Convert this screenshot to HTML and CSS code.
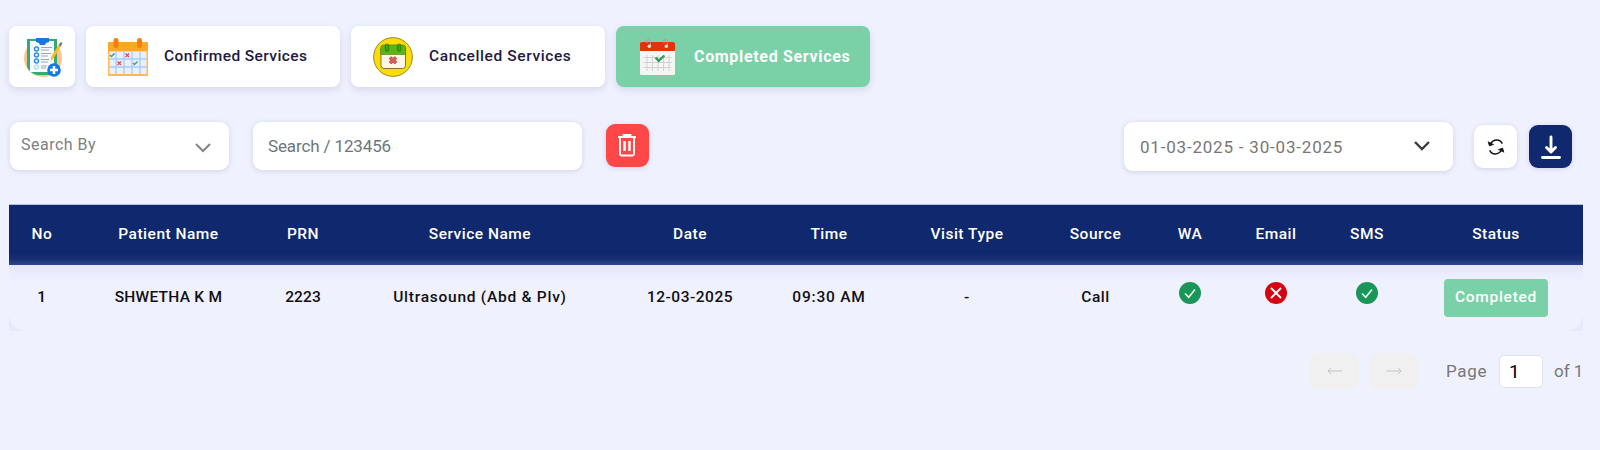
FILE: index.html
```
<!DOCTYPE html>
<html lang="en">
<head>
<meta charset="utf-8">
<title>Completed Services</title>
<link rel="stylesheet" href="styles.css">
</head>
<body>
<nav class="tabs">
  <a class="tab tab-icon">
    <svg class="art" viewBox="0 0 40 40">
      <circle cx="20" cy="21" r="19" fill="#fbc48e"/>
      <path d="M4 30V2h30v36H14Q7 36 4 30z" fill="#35a978"/>
      <path d="M7 4h24v31H7z" fill="#f6fbff"/>
      <path d="M13 1h13v4l-3 1-1 2h-5l-1-2-3-1z" fill="#1479e0"/>
      <g fill="none" stroke="#2f8fe8" stroke-width="1.5"><circle cx="13.500" cy="12" r="2"/><circle cx="13.500" cy="18" r="2"/><circle cx="13.500" cy="24" r="2"/><circle cx="13.500" cy="30" r="2" stroke="#b9dcfa"/></g>
      <path d="M18 10.500h11M18 13h8M18 16.500h10M18 19h7M18 22.500h8M18 25h7M18 29h6M18 31h5" stroke="#a2a5a8" stroke-width="1.200"/>
      <path d="M27.500 24l1-5L37 6l2 1.500-8.500 14z" fill="#fbbc1e"/>
      <path d="M35.500 8L38 5l1.500 1-2 3.500z" fill="#777"/>
      <circle cx="31" cy="33" r="6.800" fill="#1479e8"/>
      <path d="M31 29v8M27 33h8" stroke="#fff" stroke-width="2.600"/>
    </svg>
  </a>
  <a class="tab">
    <svg class="art" viewBox="0 0 40 40">
      <rect x="0" y="5" width="40" height="34" rx="1" fill="#ffb955"/>
      <path d="M0 14V6q0-1 1-1h38q1 0 1 1v8z" fill="#ffa62b"/>
      <path d="M1.500 14.500h37V37h-37z" fill="#e9f0fc"/>
      <path d="M8 14.500V37M16 14.500V37M24 14.500V37M32 14.500V37M1.500 22h37M1.500 30h37" stroke="#a5ccfb" stroke-width="1.300"/>
      <rect x="5.500" y="1" width="5" height="10" rx="2.500" fill="#f97a1f"/><rect x="29" y="1" width="5" height="10" rx="2.500" fill="#f97a1f"/>
      <path d="M2 18l1.500 1.500L6.500 16.500M25 26l1.500 1.500 3-3" fill="none" stroke="#3aa66b" stroke-width="1.500"/>
      <path d="M17.500 16.500l3.500 3.500m0-3.500L17.500 20M9.500 24.500L13 28m0-3.500L9.500 28" stroke="#e14b5e" stroke-width="1.400"/>
    </svg>
    <span>Confirmed Services</span>
  </a>
  <a class="tab tab-cancelled">
    <svg class="art" viewBox="0 0 40 40">
      <circle cx="20" cy="20" r="19.400" fill="#fbdc07" stroke="#7c731c" stroke-width=".8"/>
      <rect x="8" y="9" width="24.500" height="22.500" rx="3" fill="#fff8e8" stroke="#8a5a2c" stroke-width=".9"/>
      <path d="M7.700 17.500V11q0-3 3-3h19q3 0 3 3v6.500z" fill="#5fb414" stroke="#477f16" stroke-width=".6"/>
      <rect x="12.300" y="7.200" width="3.500" height="7" rx="1" fill="#3f9d1c" stroke="#2d7410" stroke-width=".7"/><rect x="24.300" y="7.200" width="3.500" height="7" rx="1" fill="#3f9d1c" stroke="#2d7410" stroke-width=".7"/>
      <path d="M17 20.500l6 5.500m0-5.500L17 26" stroke="#a44642" stroke-width="3.400"/><path d="M17 20.500l6 5.500m0-5.500L17 26" stroke="#e65b60" stroke-width="2.200"/>
    </svg>
    <span>Cancelled Services</span>
  </a>
  <a class="tab tab-active">
    <svg class="art" viewBox="0 0 40 40">
      <rect x="2" y="5" width="35" height="33" rx="1.500" fill="#f5f5f4"/>
      <path d="M2 14V6.500Q2 5 3.500 5h32Q37 5 37 6.500V14z" fill="#e63208"/>
      <path d="M9 18v16M14.500 18v16M20 18v16M25.500 18v16M31 18v16M5.500 20.500h28M5.500 25.500h28M5.500 30.500h28" stroke="#cfcfd2" stroke-width=".9" fill="none"/>
      <path d="M17.500 20.500l3.200 3.300 5.700-5.300" fill="none" stroke="#2f9b55" stroke-width="2.300"/>
      <path d="M9 6q-1-4 1.500-4 2 0 2 7M26 6q-1-4 1.500-4 2 0 2 7" fill="none" stroke="#b99b91" stroke-width="1"/>
      <circle cx="11.300" cy="9.300" r="1.700" fill="#ffe1d8"/><circle cx="28.300" cy="9.300" r="1.700" fill="#ffe1d8"/>
    </svg>
    <span>Completed Services</span>
  </a>
</nav>

<section class="filters">
  <div class="field field-select">
    <span>Search By</span>
    <svg width="18" height="12" viewBox="0 0 18 12"><path d="M2 2l7 7 7-7" fill="none" stroke="#858585" stroke-width="2"/></svg>
  </div>
  <div class="field field-search"><span>Search / 123456</span></div>
  <button class="square square-delete">
    <svg width="20" height="24" viewBox="0 0 20 24"><path d="M1 4h18M6.500 3.500V2h7v1.500" fill="none" stroke="#fff" stroke-width="1.800"/><path d="M3 4v17q0 1.500 1.500 1.500h11q1.500 0 1.500-1.500V4" fill="none" stroke="#fff" stroke-width="1.900"/><path d="M6.300 8h2.500v10H6.300zM11.200 8h2.500v10h-2.500z" fill="#fff"/></svg>
  </button>
  <div class="field field-date">
    <span>01-03-2025 - 30-03-2025</span>
    <svg width="18" height="12" viewBox="0 0 18 12"><path d="M2 2l7 7 7-7" fill="none" stroke="#3c3c3c" stroke-width="2.400"/></svg>
  </div>
  <button class="square square-refresh">
    <svg width="18" height="18" viewBox="0 0 20 18"><path d="M3.500 6.200Q6 1.300 11 1.300q4 0 6 4M16.500 11.800Q14 16.700 9 16.700q-4 0-6-4" fill="none" stroke="#111" stroke-width="1.700"/><path d="M1.300 3l1.400 4.700L7.500 6M18.700 15l-1.400-4.700-4.800 1.700" fill="#111" stroke="#111" stroke-width="1" stroke-linejoin="round"/></svg>
  </button>
  <button class="square square-download">
    <svg width="22" height="26" viewBox="0 0 22 26"><path d="M11 3v15M6.500 13.500L11 18l4.500-4.500M2.500 23.500h17" fill="none" stroke="#fff" stroke-width="2.900" stroke-linecap="round" stroke-linejoin="round"/></svg>
  </button>
</section>

<table class="services">
  <colgroup><col class="c-no"><col class="c-name"><col class="c-prn"><col class="c-service"><col class="c-date"><col class="c-time"><col class="c-visit"><col class="c-source"><col class="c-wa"><col class="c-email"><col class="c-sms"><col class="c-status"></colgroup>
  <thead>
    <tr><th>No</th><th>Patient Name</th><th>PRN</th><th>Service Name</th><th>Date</th><th>Time</th><th>Visit Type</th><th>Source</th><th>WA</th><th>Email</th><th>SMS</th><th>Status</th></tr>
  </thead>
  <tbody>
    <tr>
      <td>1</td><td class="t-name">SHWETHA K M</td><td class="t-prn">2223</td><td class="t-service">Ultrasound (Abd &amp; Plv)</td><td>12-03-2025</td><td class="t-time">09:30 AM</td><td>-</td><td>Call</td>
      <td><svg class="mark" viewBox="0 0 22 22"><circle cx="11" cy="11" r="11" fill="#1a9658"/><path d="M6 11.500l3.700 3.700 6.300-7.700" fill="none" stroke="#e8fff2" stroke-width="1.600"/></svg></td>
      <td><svg class="mark" viewBox="0 0 22 22"><circle cx="11" cy="11" r="11" fill="#d40511"/><path d="M6.500 6.500l9 9m0-9l-9 9" stroke="#fff" stroke-width="1.900" stroke-linecap="round"/></svg></td>
      <td><svg class="mark" viewBox="0 0 22 22"><circle cx="11" cy="11" r="11" fill="#1a9658"/><path d="M6 11.500l3.700 3.700 6.300-7.700" fill="none" stroke="#e8fff2" stroke-width="1.600"/></svg></td>
      <td><span class="status">Completed</span></td>
    </tr>
  </tbody>
</table>

<footer class="pager">
  <button class="step"><svg width="15" height="8" viewBox="0 0 15 8"><path d="M15 4H1M4 1L1 4l3 3" fill="none" stroke="#c3c3c3"/></svg></button>
  <button class="step"><svg width="15" height="8" viewBox="0 0 15 8"><path d="M0 4h14M11 1l3 3-3 3" fill="none" stroke="#c3c3c3"/></svg></button>
  <span class="page-label">Page</span>
  <span class="page-box">1</span>
  <span class="page-total">of 1</span>
</footer>
</body>
</html>
```
FILE: styles.css
```
* { box-sizing: border-box; }
body {
  margin: 0;
  padding: 26px 17px 0 9px;
  height: 450px;
  overflow: hidden;
  background: #f0f1ff;
  font-family: Roboto, "Open Sans", sans-serif;
  font-size: 16px;
}
button { border: 0; padding: 0; font: inherit; }
svg { display: block; flex: none; }

.tabs { display: flex; gap: 11px; height: 61px; }
.tab {
  display: flex;
  align-items: center;
  gap: 16px;
  width: 254px;
  padding: 0 0 0 22px;
  border-radius: 8px;
  background: #fff;
  color: #231942;
  font-weight: 500;
  font-size: 15.5px;
  letter-spacing: .4px;
  white-space: nowrap;
  box-shadow: 0 3px 7px rgba(60, 60, 90, .14);
}
.tab span { padding-bottom: 1px; }
.tab-icon { width: 66px; padding-left: 14px; }
.tab-cancelled { letter-spacing: .6px; }
.tab-active { background: #7ad1a7; color: #fff; font-weight: 700; font-size: 16px; letter-spacing: .67px; }
.art { width: 40px; height: 40px; }

.filters { display: flex; align-items: flex-start; margin-top: 35px; height: 50px; }
.field {
  display: flex;
  align-items: center;
  justify-content: space-between;
  height: 48px;
  border-radius: 9px;
  background: #fff;
  color: #6c757d;
  white-space: nowrap;
  box-shadow: 0 1px 5px rgba(60, 60, 90, .17);
}
.field-select { width: 219px; margin-left: 1px; padding: 0 17px 3px 11px; color: #808080; letter-spacing: .48px; }
.field-select svg { margin-top: 6px; }
.field-search { width: 329px; margin-left: 24px; padding-left: 15px; font-size: 17px; letter-spacing: -.13px; }
.field-date { width: 329px; height: 49px; margin-left: auto; padding: 0 22px 0 16px; color: #777; font-size: 17px; letter-spacing: .8px; }
.field-date svg { margin-top: -2px; }
.square {
  display: flex;
  align-items: center;
  justify-content: center;
  width: 43px;
  height: 43px;
  border-radius: 9px;
  box-shadow: 0 1px 5px rgba(60, 60, 90, .17);
}
.square-delete { margin: 2px 0 0 24px; background: #ff4747; }
.square-delete svg { margin: -1px 1px 0 0; }
.square-refresh { margin: 3px 0 0 21px; background: #fff; }
.square-download { margin: 3px 11px 0 12px; background: #0f286e; }

.services {
  width: 1574px;
  margin-top: 32px;
  border-top: 1px solid #b3bfe3;
  border-spacing: 0;
  table-layout: fixed;
  font-size: 15.5px;
  font-weight: 500;
  letter-spacing: .5px;
}
.services th, .services td { padding: 0 0 2px; text-align: center; white-space: nowrap; }
.services th { height: 60px; color: #fff; font-weight: 500; }
.services thead { background: linear-gradient(#0f286e 80%, #1a3074 91%, #32468a); }
.services td { height: 66px; color: #101014; }
.services tbody {
  background:
    radial-gradient(circle at 100% 0, transparent 15px, #e8e9fb 16px) 0 100% / 16px 16px no-repeat,
    radial-gradient(circle at 0 0, transparent 15px, #e8e9fb 16px) 100% 100% / 16px 16px no-repeat,
    linear-gradient(#e5e6fb, #f0f1ff 26%);
}
.services th:last-child, .services td:last-child { padding-right: 2px; }
.services .t-name { letter-spacing: .25px; }
.services .t-prn { letter-spacing: .1px; }
.services .t-service { letter-spacing: .75px; }
.services .t-time { letter-spacing: .8px; }
.c-no { width: 66px; }
.c-name { width: 187px; }
.c-prn { width: 82px; }
.c-service { width: 272px; }
.c-date { width: 148px; }
.c-time { width: 130px; }
.c-visit { width: 146px; }
.c-source { width: 111px; }
.c-wa { width: 78px; }
.c-email { width: 94px; }
.c-sms { width: 88px; }
.c-status { width: 172px; }
.mark { width: 22px; height: 22px; margin: -8px auto 0; }
.status {
  display: inline-block;
  width: 104px;
  height: 38px;
  margin-top: 2px;
  border-radius: 4px;
  background: #7ad1a7;
  color: #fff;
  line-height: 37px;
  letter-spacing: .7px;
  vertical-align: middle;
}

.pager { display: flex; align-items: center; height: 38px; margin-top: 21px; color: #777; font-size: 17px; }
.step { display: flex; align-items: center; justify-content: center; width: 50px; height: 37px; margin-right: 10px; border-radius: 9px; background: #f0f0f0; }
.step:first-child { margin-left: auto; }
.page-label { width: 53px; margin-left: 17px; letter-spacing: .7px; }
.page-box { width: 44px; height: 33px; padding-left: 9px; border: 1px solid #e2e2ea; border-radius: 5px; background: #fff; color: #000; font-size: 19px; line-height: 31px; }
.page-total { width: 29px; margin-left: 11px; white-space: nowrap; }
```
